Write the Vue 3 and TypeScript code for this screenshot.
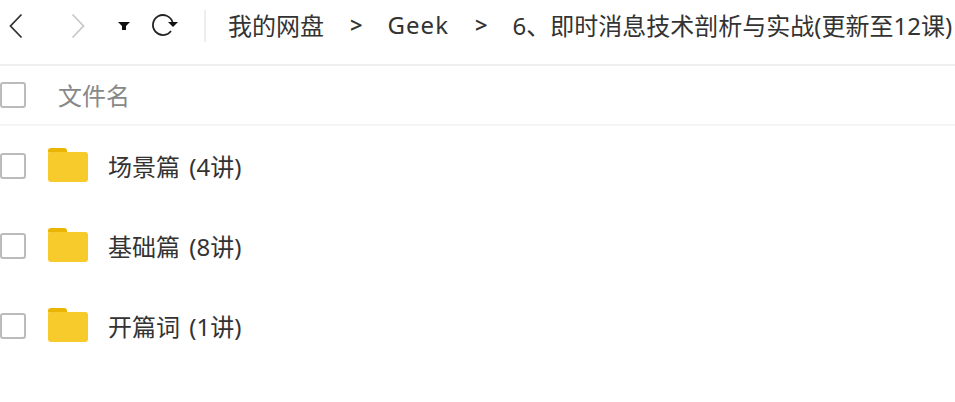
<script setup lang="ts">
const crumbs: string[] = ['我的网盘', 'Geek', '6、即时消息技术剖析与实战(更新至12课)']
const folders: string[] = ['场景篇 (4讲)', '基础篇 (8讲)', '开篇词 (1讲)']
</script>

<template>
  <div class="page">
    <header class="toolbar">
      <div class="nav">
        <svg class="back" width="14" height="26" viewBox="0 0 14 26"><path d="M12.5 1.5 1.5 13l11 11.5" fill="none" stroke="#333" stroke-width="1.8" /></svg>
        <svg class="forward" width="14" height="26" viewBox="0 0 14 26"><path d="M1.5 1.5 12.5 13l-11 11.5" fill="none" stroke="#c9c9c9" stroke-width="1.8" /></svg>
        <svg class="caret" width="12" height="8" viewBox="0 0 12 8"><path d="M0 0h12L8 4v4H4V4z" fill="#111" /></svg>
        <svg class="refresh" width="28" height="28" viewBox="0 0 28 28"><path d="M22.5 10A10 10 0 1 0 21 19" fill="none" stroke="#222" stroke-width="1.8" /><path d="M18 10h10l-5 5z" fill="#111" /></svg>
      </div>
      <nav class="crumbs">
        <template v-for="(crumb, i) in crumbs" :key="crumb">
          <span v-if="i > 0" class="sep">&gt;</span>
          <span class="crumb" :class="{ latin: i === 1 }">{{ crumb }}</span>
        </template>
      </nav>
    </header>
    <div class="list-head">
      <span class="check"></span>
      <span class="head-label">文件名</span>
    </div>
    <ul class="list">
      <li v-for="name in folders" :key="name" class="row">
        <span class="check"></span>
        <svg class="folder" width="40" height="34" viewBox="0 0 40 34">
          <path d="M0 3a3 3 0 0 1 3-3h13a3 3 0 0 1 3 3v1H0z" fill="#e9b500" />
          <path d="M0 5a1 1 0 0 1 1-1h36a3 3 0 0 1 3 3v24a3 3 0 0 1-3 3H3a3 3 0 0 1-3-3z" fill="#f8cb2c" />
        </svg>
        <span class="name">{{ name }}</span>
      </li>
    </ul>
  </div>
</template>

<style>
html, body { margin: 0; background: #fff; overflow: hidden; }
</style>

<style scoped>
.page {
  width: 955px;
  height: 402px;
  overflow: hidden;
  font-family: "Noto Sans", "Noto Sans CJK SC", sans-serif;
  font-size: 24px;
  color: #333;
}
.toolbar {
  display: flex;
  align-items: center;
  height: 52px;
  padding-bottom: 12px;
  border-bottom: 2px solid #f0f0f0;
  white-space: nowrap;
}
.nav {
  display: flex;
  align-items: center;
  width: 204px;
  height: 32px;
  flex: none;
  border-right: 2px solid #eee;
}
.back { margin-left: 9px; }
.forward { margin-left: 48px; }
.caret { margin-left: 33px; }
.refresh { margin-left: 20px; }
.crumbs {
  display: flex;
  align-items: center;
  margin-left: 22px;
  margin-top: -4px;
}
.latin { letter-spacing: 1px; }
.sep { margin: 0 25px 0 26px; font-size: 22px; font-weight: 600; }
.list-head {
  display: flex;
  align-items: center;
  height: 58px;
  border-bottom: 2px solid #f5f5f5;
  color: #888;
}
.check {
  flex: none;
  width: 22px;
  height: 22px;
  border: 2px solid #bbb;
  border-radius: 3px;
}
.head-label { margin-left: 32px; margin-top: -2px; }
.list { list-style: none; margin: 0; padding: 0; }
.row {
  display: flex;
  align-items: center;
  height: 80px;
}
.folder { margin-left: 22px; flex: none; margin-top: -2px; }
.name { margin-left: 20px; margin-top: -2px; word-spacing: 3px; }
</style>
